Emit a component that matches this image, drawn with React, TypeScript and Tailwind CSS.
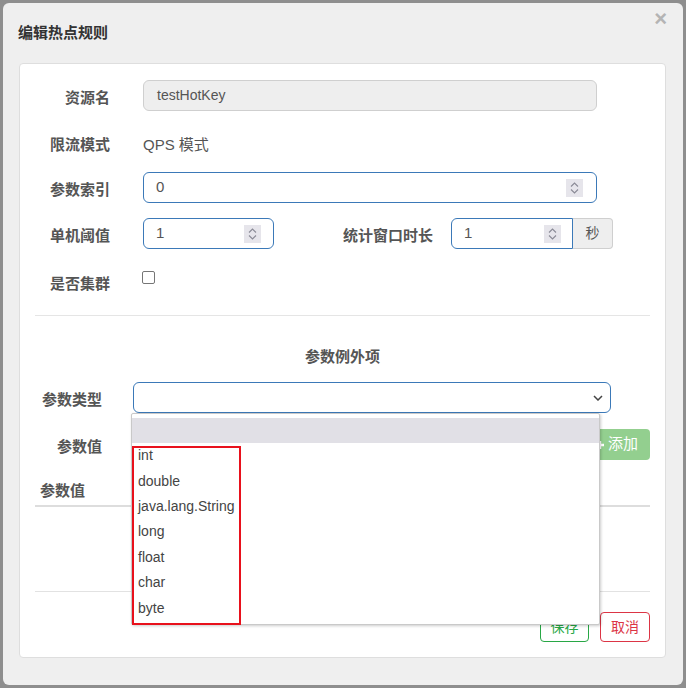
import React from 'react';

const font = "font-['Liberation_Sans','Noto_Sans_CJK_SC',sans-serif]";

function Spinner() {
  return (
    <div className="w-[17px] h-[18px] bg-[#e6e5eb] flex flex-col items-center justify-center gap-[2px]">
      <svg width="9" height="5" viewBox="0 0 9 5" fill="none">
        <path d="M1 4.5L4.5 1L8 4.5" stroke="#8a8a96" strokeWidth="1.1" />
      </svg>
      <svg width="9" height="5" viewBox="0 0 9 5" fill="none">
        <path d="M1 0.5L4.5 4L8 0.5" stroke="#8a8a96" strokeWidth="1.1" />
      </svg>
    </div>
  );
}

function Label({ children, w = 'w-[75px]' }: { children: React.ReactNode; w?: string }) {
  return <div className={`${w} shrink-0 pt-[6px] text-right text-[15px] font-bold text-[#555]`}>{children}</div>;
}

const options = ['int', 'double', 'java.lang.String', 'long', 'float', 'char', 'byte'];

export default function App() {
  return (
    <div className={`w-[686px] h-[688px] bg-[#8e8e8e] pt-[3px] pl-[3px] ${font}`}>
      <div className="w-[680px] h-[682px] rounded-[6px] bg-[#efefef] flex flex-col">
        {/* header */}
        <div className="h-[60px] flex items-start justify-between pl-[15px] pr-[16px]">
          <div className="mt-[19px] text-[15px] font-bold text-[#333]">编辑热点规则</div>
          <div className="mt-[5px] text-[22px] font-bold leading-none text-[#b4b4b4]">×</div>
        </div>

        {/* card */}
        <div className="relative ml-[16px] w-[647px] h-[595px] rounded-[4px] border border-[#dedede] bg-white px-[15px] flex flex-col">
          <div className="mt-[16px] h-[31px] flex items-center">
            <Label>资源名</Label>
            <div className="ml-[33px] w-[454px] h-[31px] rounded-[6px] border border-[#cfcfcf] bg-[#eeeeee] flex items-center pl-[13px] text-[14px] text-[#555]">
              testHotKey
            </div>
          </div>

          <div className="mt-[16px] h-[31px] flex items-center">
            <Label>限流模式</Label>
            <div className="ml-[33px] pt-[6px] text-[15px] text-[#555]">QPS 模式</div>
          </div>

          <div className="mt-[14px] h-[31px] flex items-center">
            <Label>参数索引</Label>
            <div className="ml-[33px] w-[454px] h-[31px] rounded-[6px] border border-[#3b79b8] flex items-center justify-between pl-[12px] pr-[13px] text-[15px] text-[#555]">
              <span>0</span>
              <Spinner />
            </div>
          </div>

          <div className="mt-[15px] h-[31px] flex items-center">
            <Label>单机阈值</Label>
            <div className="ml-[33px] w-[131px] h-[31px] rounded-[6px] border border-[#3b79b8] flex items-center justify-between pl-[12px] pr-[12px] text-[15px] text-[#555]">
              <span>1</span>
              <Spinner />
            </div>
            <div className="ml-[69px] w-[93px] pt-[6px] text-[15px] font-bold text-[#555]">统计窗口时长</div>
            <div className="ml-[15px] flex">
              <div className="w-[122px] h-[31px] rounded-l-[6px] border border-[#3b79b8] flex items-center justify-between pl-[12px] pr-[11px] text-[15px] text-[#555]">
                <span>1</span>
                <Spinner />
              </div>
              <div className="w-[40px] h-[31px] rounded-r-[4px] border border-l-0 border-[#cfcfcf] bg-[#eeeeee] flex items-center justify-center text-[14px] text-[#555]">
                秒
              </div>
            </div>
          </div>

          <div className="mt-[17px] h-[31px] flex items-center">
            <Label>是否集群</Label>
            <div className="ml-[32px] self-start mt-[5px] w-[13px] h-[13px] rounded-[2px] border-[1.5px] border-[#767676] bg-white" />
          </div>

          <div className="mt-[18px] border-t border-[#e5e5e5]" />

          <div className="mt-[30px] h-[20px] text-center text-[15px] font-bold text-[#555]">参数例外项</div>

          <div className="mt-[16px] h-[31px] flex items-center">
            <Label w="w-[67px]">参数类型</Label>
            <div className="ml-[31px] w-[478px] h-[31px] rounded-[6px] border border-[#3b79b8] flex items-center justify-end pr-[7px]">
              <svg width="10" height="6" viewBox="0 0 10 6" fill="none">
                <path d="M1 1L5 5L9 1" stroke="#444" strokeWidth="1.5" />
              </svg>
            </div>
          </div>

          <div className="mt-[16px] h-[31px] flex items-center">
            <Label w="w-[67px]">参数值</Label>
            <div className="flex-1" />
            <div className="w-[55px] h-[31px] rounded-[4px] bg-[#93cf8f] flex items-center justify-end pr-[12px] gap-[4px] text-[15px] text-white">
              <svg width="8" height="8" viewBox="0 0 8 8">
                <path d="M4 0V8M0 4H8" stroke="white" strokeWidth="2.4" />
              </svg>
              <span>添加</span>
            </div>
          </div>

          <div className="mt-[19px] h-[28px] border-b-2 border-[#dddddd] pl-[5px] pt-[1px] text-[15px] font-bold text-[#555]">参数值</div>

          <div className="mt-[84px] border-t border-[#e2e2e2]" />

          <div className="mt-[20px] flex justify-end gap-[11px]">
            <div className="w-[49px] h-[30px] rounded-[4px] border border-[#28a745] flex items-center justify-center text-[14px] text-[#28a745]">保存</div>
            <div className="w-[50px] h-[30px] rounded-[4px] border border-[#dc3545] flex items-center justify-center text-[14px] text-[#dc3545]">取消</div>
          </div>

          {/* open select menu */}
          <div className="absolute left-[111px] top-[349px] w-[469px] h-[212px] border border-[#c9c9c9] bg-white rounded-[2px] shadow-[1px_1px_3px_rgba(0,0,0,0.2)] pt-[4px]">
            <div className="h-[25px] bg-[#e1e0e6]" />
            <div className="flex flex-col">
              {options.map((o) => (
                <div key={o} className="h-[25.4px] flex items-center pl-[6px] text-[14px] text-[#444]">
                  {o}
                </div>
              ))}
            </div>
            <div className="absolute left-0 top-[32px] w-[109px] h-[179px] border-2 border-[#e8111c]" />
          </div>
        </div>
      </div>
    </div>
  );
}
